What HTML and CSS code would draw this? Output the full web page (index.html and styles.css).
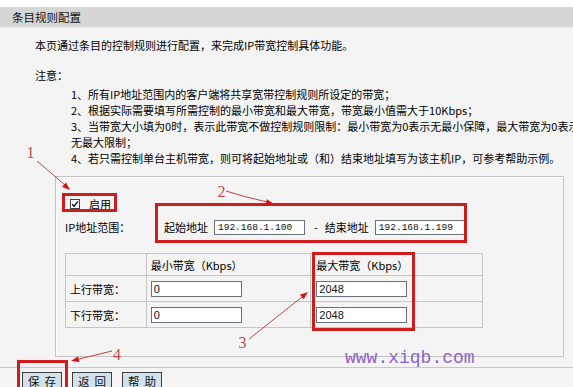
FILE: index.html
```html
<!DOCTYPE html>
<html lang="zh-CN">
<head>
<meta charset="utf-8">
<title>条目规则配置</title>
<link rel="stylesheet" href="styles.css">
</head>
<body>
<div class="page">
  <div class="titlebar">条目规则配置</div>
  <div class="main">
    <p class="intro">本页通过条目的控制规则进行配置，来完成IP带宽控制具体功能。</p>
    <p class="note-title">注意：</p>
    <div class="notes">
      <div class="note">1、所有IP地址范围内的客户端将共享宽带控制规则所设定的带宽；</div>
      <div class="note">2、根据实际需要填写所需控制的最小带宽和最大带宽，带宽最小值需大于10Kbps；</div>
      <div class="note">3、当带宽大小填为0时，表示此带宽不做控制规则限制：最小带宽为0表示无最小保障，最大带宽为0表示<br>无最大限制；</div>
      <div class="note">4、若只需控制单台主机带宽，则可将起始地址或（和）结束地址填写为该主机IP，可参考帮助示例。</div>
    </div>

    <div class="panel">
      <div class="row enable-row">
        <span class="cb"><svg width="8" height="8" viewBox="0 0 8 8"><path d="M1 4.2 L3 6.3 L7 1.4" fill="none" stroke="#111" stroke-width="1.4"/></svg></span>
        <span class="cb-label">启用</span>
      </div>
      <div class="row ip-row">
        <span class="ip-label">IP地址范围：</span>
        <span class="addr-label">起始地址</span>
        <span class="field ip-field">192.168.1.100</span>
        <span class="dash">-</span>
        <span class="addr-label">结束地址</span>
        <span class="field ip-field">192.168.1.199</span>
      </div>
      <table class="bw">
        <tr class="bw-head">
          <td class="c1"></td>
          <td class="c2">最小带宽（Kbps）</td>
          <td class="c3">最大带宽（Kbps）</td>
        </tr>
        <tr class="bw-row">
          <td class="c1">上行带宽：</td>
          <td class="c2"><span class="field num-field">0</span></td>
          <td class="c3"><span class="field num-field">2048</span></td>
        </tr>
        <tr class="bw-row">
          <td class="c1">下行带宽：</td>
          <td class="c2"><span class="field num-field">0</span></td>
          <td class="c3"><span class="field num-field">2048</span></td>
        </tr>
      </table>
    </div>

    <div class="sep"></div>
    <div class="buttons">
      <span class="btn">保存</span>
      <span class="btn">返回</span>
      <span class="btn">帮助</span>
    </div>
  </div>
</div>

<svg class="overlay" width="573" height="387" viewBox="0 0 573 387">
  <g fill="none" stroke="#cf1c1c" stroke-width="3">
    <rect x="63.5" y="194.5" width="52" height="16"/>
    <rect x="156.5" y="204.5" width="309" height="37"/>
    <rect x="313.5" y="253.5" width="100" height="76"/>
    <rect x="18.5" y="361.5" width="48" height="30"/>
  </g>
  <g fill="none" stroke="#c24444" stroke-width="1">
    <path d="M37 161 L65 185"/>
    <path d="M226 191 Q245 197 267 202"/>
    <path d="M249 339 L302 297"/>
    <path d="M112 351 L79 359"/>
  </g>
  <g fill="#d21414">
    <polygon points="70,190 62,186.9 66,182.4"/>
    <polygon points="274,204 265.5,205 266.9,199.2"/>
    <polygon points="308,292 303.7,299.3 299.9,294.7"/>
    <polygon points="71,361 78.1,356.2 79.5,362"/>
  </g>
  <g class="anno-num" fill="#c44a4a" text-anchor="middle">
    <text x="30.5" y="158">1</text>
    <text x="221.5" y="197">2</text>
    <text x="242.5" y="348">3</text>
    <text x="117" y="360">4</text>
  </g>
  <text class="watermark" x="345" y="363">www.xiqb.com</text>
</svg>
</body>
</html>
```

FILE: styles.css
```css
* { box-sizing: border-box; }

html, body {
  margin: 0;
  padding: 0;
  width: 573px;
  height: 387px;
  overflow: hidden;
  background: #ffffff;
  font-family: "Noto Sans CJK SC", "Noto Sans", sans-serif;
  font-size: 11px;
  color: #000;
}

.page {
  padding-top: 7px;
}

.titlebar {
  height: 20px;
  line-height: 20px;
  background: #d6d6d6;
  padding-left: 12px;
  font-size: 11.5px;
  color: #111;
}

.main {
  background: #f4f4f4;
  height: 360px;
  overflow: hidden;
  border-top: 1px solid #ececec;
}

.intro {
  margin: 9px 0 0 35px;
  line-height: 16px;
}

.note-title {
  margin: 14px 0 0 35px;
  line-height: 16px;
}

.notes {
  margin-top: 3px;
  padding-left: 71px;
}

.note {
  line-height: 16px;
  white-space: nowrap;
}

.panel {
  margin: 10px 9px 0 55px;
  border: 1px solid #c4c4c4;
  box-shadow: inset 1px 1px 0 #ffffff;
  padding: 19px 9px 28px 9px;
}

.row {
  display: flex;
  align-items: center;
  height: 16px;
}

.cb {
  display: flex;
  align-items: center;
  justify-content: center;
  width: 10px;
  height: 10px;
  margin-left: 5px;
  border: 1px solid #444;
  background: #fff;
}

.cb-label {
  margin-left: 9px;
}

.ip-row {
  margin-top: 7px;
}

.ip-label {
  width: 99px;
  flex: none;
}

.addr-label {
  margin-right: 6px;
}

.field {
  display: inline-flex;
  align-items: center;
  background: #fff;
  border: 1px solid #69727c;
  padding: 0 3px;
  white-space: nowrap;
}

.ip-field {
  width: 91px;
  height: 15px;
  font-family: "Liberation Mono", monospace;
  font-size: 9.5px;
  color: #111;
}

.dash {
  margin: 0 7px 0 9px;
}

.bw {
  margin-top: 18px;
  border-collapse: collapse;
  width: 418px;
}

.bw td {
  border: 1px solid #c6c6c6;
  padding: 0 0 0 4px;
  vertical-align: middle;
}

.bw .c1 { width: 81px; }
.bw .c2 { width: 165px; }
.bw .c3 { width: 172px; padding-left: 5px; }

.bw-head td { height: 22px; }
.bw-row td { height: 26px; }

.num-field {
  width: 91px;
  height: 16px;
  font-family: "Liberation Sans", Arial, sans-serif;
  font-size: 11px;
  padding-left: 2px;
  color: #111;
}

.sep {
  margin-top: 10px;
  height: 1px;
  background: #d6c7a0;
}

.buttons {
  display: flex;
  gap: 10px;
  margin-top: 4px;
  padding-left: 22px;
}

.btn {
  display: flex;
  align-items: center;
  justify-content: center;
  width: 40px;
  height: 17px;
  background: #d4e1eb;
  border: 1px solid #3e3e3e;
  font-size: 11.5px;
  letter-spacing: 5px;
  padding-left: 5px;
  color: #111;
  white-space: nowrap;
}

.overlay {
  position: absolute;
  left: 0;
  top: 0;
  pointer-events: none;
}

.anno-num {
  font-family: "Liberation Serif", serif;
  font-size: 16px;
}

.watermark {
  font-family: "Liberation Mono", monospace;
  font-size: 18px;
  fill: #8b66c6;
}
```
